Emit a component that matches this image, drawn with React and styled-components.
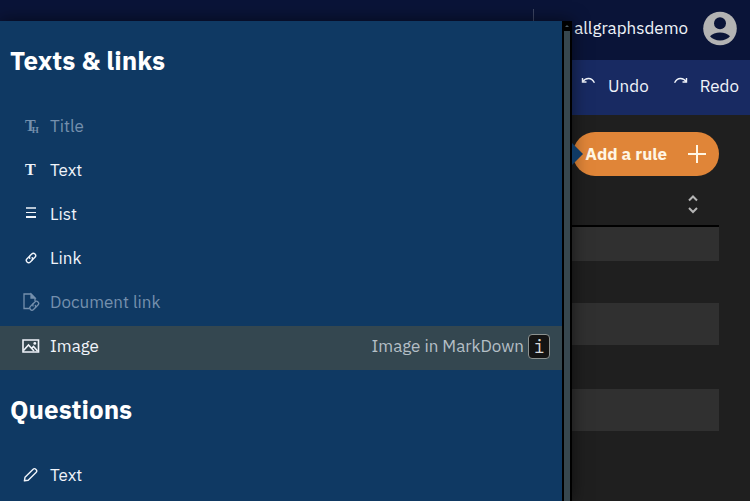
import { createGlobalStyle, styled } from "styled-components";

const GlobalStyle = createGlobalStyle`
  * {
    box-sizing: border-box;
  }

  html,
  body,
  #root {
    height: 100%;
  }

  body {
    margin: 0;
    overflow: hidden;
    background-color: #1f1f1f;
    color: #f0f4fa;
    font-family: "IBM Plex Sans", "Noto Sans", sans-serif;
    font-size: 17px;
  }

  button {
    border: 0;
    padding: 0;
    background: none;
    color: inherit;
    font: inherit;
    cursor: pointer;
  }
`;

const Page = styled.div`
  position: relative;
  min-height: 100%;
`;

const Header = styled.header`
  display: flex;
  justify-content: flex-end;
  height: 60px;
  padding-right: 12px;
  background-color: #0a1438;
`;

const Account = styled.div`
  display: flex;
  align-items: center;
  gap: 14px;
  height: 56px;
`;

const Divider = styled.span`
  align-self: flex-start;
  width: 1px;
  height: 38px;
  margin-top: 9px;
  margin-right: 40px;
  background-color: #3d4562;
`;

const Toolbar = styled.nav`
  display: flex;
  justify-content: flex-end;
  gap: 24px;
  height: 55px;
  padding-right: 11px;
  padding-bottom: 3px;
  background-color: #182a62;
`;

const ToolButton = styled.button`
  display: flex;
  align-items: center;
  gap: 12px;

  svg {
    margin-bottom: 8px;
  }
`;

const Content = styled.main`
  display: flex;
  flex-direction: column;
  align-items: flex-end;
  padding: 17px 31px 0 0;
`;

const AddButton = styled.button`
  display: flex;
  align-items: center;
  justify-content: space-between;
  gap: 20px;
  height: 44px;
  padding: 0 12px;
  border-radius: 22px;
  background-color: #e08538;
  color: #fff6e4;
  font-weight: 700;
`;

const RuleTable = styled.table`
  width: 100%;
  border-collapse: collapse;
`;

const SortHead = styled.th`
  height: 50px;
  padding: 12px 19px 0 0;
  border-bottom: 2px solid #000;
  text-align: right;
`;

const SortButton = styled.button`
  display: inline-flex;
  color: #b4b4b4;
`;

const RuleRow = styled.tr`
  height: ${({ $height }) => $height}px;
  background-color: ${({ $filled }) => ($filled ? "#303030" : "transparent")};
`;

const RuleCell = styled.td`
  padding: 0;
`;

const Menu = styled.aside`
  position: absolute;
  top: 21px;
  bottom: 0;
  left: 0;
  right: 178px;
  display: flex;
  background-color: #0f3963;
  box-shadow: 0 0 16px rgba(0, 0, 0, 0.55);
`;

const MenuArrow = styled.span`
  position: absolute;
  top: 122px;
  left: 100%;
  border: 11px solid transparent;
  border-left-color: #0f3963;
  border-right-width: 0;
`;

const MenuBody = styled.div`
  flex: 1;
  overflow: hidden;
`;

const ScrollTrack = styled.div`
  display: flex;
  flex-direction: column;
  align-items: center;
  width: 10px;
  background-color: #000;
`;

const ScrollArrow = styled.span`
  margin: 4px 0;
  border: 2px solid transparent;
  border-top-width: 0;
  border-bottom-color: #4a5a62;
`;

const ScrollThumb = styled.span`
  flex: 1;
  width: 6px;
  background-color: #37474f;
`;

const SectionTitle = styled.h2`
  height: 85px;
  margin: 0;
  padding: 0 10px;
  color: #fff;
  font-size: 26px;
  font-weight: 700;
  line-height: 78px;
`;

const ItemList = styled.ul`
  margin: 0;
  padding: 0;
  list-style: none;
`;

const ItemButton = styled.button`
  display: flex;
  align-items: center;
  width: 100%;
  height: 44px;
  padding: 0 12px 4px 22px;
  background-color: ${({ $active }) => ($active ? "#344750" : "transparent")};

  &:disabled {
    color: #7590ad;
  }
`;

const IconSlot = styled.span`
  display: flex;
  width: 28px;
  padding-left: ${({ $inset }) => ($inset ? 3 : 0)}px;
`;

const SerifIcon = styled.span`
  display: flex;
  align-items: flex-end;
  font-family: "Liberation Serif", serif;
  font-size: 16px;
  font-weight: 700;
  line-height: 18px;
`;

const SmallLetter = styled.span`
  margin-left: -4px;
  font-size: 9px;
  line-height: 9px;
`;

const Hint = styled.span`
  display: flex;
  align-items: center;
  gap: 4px;
  margin-left: auto;
  color: #b4bfc6;
`;

const Key = styled.kbd`
  width: 22px;
  height: 25px;
  border: 1px solid #8c9290;
  border-radius: 4px;
  background-color: #141414;
  color: #d8d8d8;
  font-family: "IBM Plex Mono", "Liberation Mono", monospace;
  font-size: 18px;
  line-height: 23px;
  text-align: center;
`;

function TitleIcon() {
  return (
    <SerifIcon aria-hidden="true">
      T<SmallLetter>H</SmallLetter>
    </SerifIcon>
  );
}

function TextIcon() {
  return <SerifIcon aria-hidden="true">T</SerifIcon>;
}

function ListIcon() {
  return (
    <svg width="12" height="14" viewBox="0 0 12 14" fill="currentColor">
      <path d="M1 0h10v2H1z" opacity="0.75" />
      <path d="M1 5h10v1H1zM1 9h10v2H1z" />
    </svg>
  );
}

const halfLink = "M.3-2.3h-3.6a2.3 2.3 0 0 0 0 4.6h2.2A2.3 2.3 0 0 0 1.1.6";

function ChainPaths() {
  return (
    <g transform="translate(6 6) rotate(-45)">
      <path d={halfLink} />
      <path d={halfLink} transform="rotate(180)" />
    </g>
  );
}

function LinkIcon() {
  return (
    <svg
      width="12"
      height="12"
      viewBox="0 0 12 12"
      fill="none"
      stroke="currentColor"
      strokeWidth="1.4"
      strokeLinecap="round"
    >
      <ChainPaths />
    </svg>
  );
}

function DocumentLinkIcon() {
  return (
    <svg
      width="18"
      height="20"
      viewBox="0 0 18 20"
      fill="none"
      stroke="currentColor"
      strokeWidth="1.3"
    >
      <path d="M7 16.5H2V2h7l4 4v3" />
      <path d="M9 2v4h4z" fill="currentColor" />
      <g transform="translate(6.5 8) scale(0.95)" strokeWidth="1.4" strokeLinecap="round">
        <ChainPaths />
      </g>
    </svg>
  );
}

function ImageIcon() {
  return (
    <svg
      width="18"
      height="16"
      viewBox="0 0 18 16"
      fill="none"
      stroke="currentColor"
      strokeWidth="1.6"
    >
      <path d="M1 2h15.5v12H1z" />
      <path d="m1.5 12.5 5-5.5 5.5 6M9.5 10.5 11.5 8.5l4 4.5" />
      <circle cx="12.8" cy="5.4" r="1.4" fill="currentColor" stroke="none" />
    </svg>
  );
}

function PenIcon() {
  return (
    <svg
      width="16"
      height="16"
      viewBox="0 0 16 16"
      fill="none"
      stroke="currentColor"
      strokeWidth="1.4"
      strokeLinejoin="round"
    >
      <path d="M2.4 13.8 3 10.3l7.9-7.9a2.1 2.1 0 0 1 3.1 3.1L6.2 13.3z" />
    </svg>
  );
}

function TurnIcon({ flipped }) {
  return (
    <svg
      width="15"
      height="12"
      viewBox="0 0 15 12"
      fill="none"
      stroke="currentColor"
      strokeWidth="1.4"
    >
      <g transform={flipped ? "matrix(-1 0 0 1 15 0)" : undefined}>
        <path d="M1.6 5.8C4.5 1.6 10.7 1 13.4 6.8" />
        <path d="M1.5 2v4h4" />
      </g>
    </svg>
  );
}

function AvatarIcon() {
  return (
    <svg width="36" height="36" viewBox="0 0 36 36" role="img" aria-label="Account">
      <circle cx="18" cy="18.5" r="16.8" fill="#b3b3b3" />
      <circle cx="18" cy="13.2" r="6" fill="#0a1438" />
      <path d="M8 26.2C10 23.8 14 22.4 18 22.4s8 1.4 10 3.8C26 28.8 22 30.4 18 30.4s-8-1.6-10-4.2z" fill="#0a1438" />
    </svg>
  );
}

function PlusIcon() {
  return (
    <svg width="20" height="20" viewBox="0 0 20 20" stroke="currentColor" strokeWidth="2">
      <path d="M10 1v18M1 10h18" />
    </svg>
  );
}

function SortIcon() {
  return (
    <svg
      width="14"
      height="20"
      viewBox="0 0 14 20"
      fill="none"
      stroke="currentColor"
      strokeWidth="2"
    >
      <path d="m3 6.5 4-4 4 4M3 14l4 4 4-4" />
    </svg>
  );
}

const sections = [
  {
    title: "Texts & links",
    items: [
      { label: "Title", icon: TitleIcon, inset: true, disabled: true },
      { label: "Text", icon: TextIcon, inset: true },
      { label: "List", icon: ListIcon, inset: true },
      { label: "Link", icon: LinkIcon, inset: true },
      { label: "Document link", icon: DocumentLinkIcon, disabled: true },
      { label: "Image", icon: ImageIcon, active: true, hint: "Image in MarkDown", hotkey: "i" },
    ],
  },
  {
    title: "Questions",
    items: [{ label: "Text", icon: PenIcon }],
  },
];

const rules = [
  { id: 1, height: 35 },
  { id: 2, height: 42 },
  { id: 3, height: 42 },
  { id: 4, height: 44 },
  { id: 5, height: 42 },
];

function MenuItem({ item }) {
  const Icon = item.icon;

  return (
    <li>
      <ItemButton type="button" disabled={item.disabled} $active={item.active}>
        <IconSlot $inset={item.inset}>
          <Icon />
        </IconSlot>
        {item.label}
        {item.hint && (
          <Hint>
            {item.hint}
            <Key>{item.hotkey}</Key>
          </Hint>
        )}
      </ItemButton>
    </li>
  );
}

export default function App() {
  return (
    <>
      <GlobalStyle />
      <Page>
        <Header>
          <Divider />
          <Account>
            allgraphsdemo
            <AvatarIcon />
          </Account>
        </Header>
        <Toolbar>
          <ToolButton type="button">
            <TurnIcon />
            Undo
          </ToolButton>
          <ToolButton type="button">
            <TurnIcon flipped />
            Redo
          </ToolButton>
        </Toolbar>
        <Content>
          <AddButton type="button">
            Add a rule
            <PlusIcon />
          </AddButton>
          <RuleTable>
            <thead>
              <tr>
                <SortHead>
                  <SortButton type="button" aria-label="Sort">
                    <SortIcon />
                  </SortButton>
                </SortHead>
              </tr>
            </thead>
            <tbody>
              {rules.map((rule, index) => (
                <RuleRow key={rule.id} $height={rule.height} $filled={index % 2 === 0}>
                  <RuleCell />
                </RuleRow>
              ))}
            </tbody>
          </RuleTable>
        </Content>
        <Menu>
          <MenuBody>
            {sections.map((section) => (
              <section key={section.title}>
                <SectionTitle>{section.title}</SectionTitle>
                <ItemList>
                  {section.items.map((item) => (
                    <MenuItem key={item.label} item={item} />
                  ))}
                </ItemList>
              </section>
            ))}
          </MenuBody>
          <ScrollTrack>
            <ScrollArrow />
            <ScrollThumb />
          </ScrollTrack>
          <MenuArrow />
        </Menu>
      </Page>
    </>
  );
}
